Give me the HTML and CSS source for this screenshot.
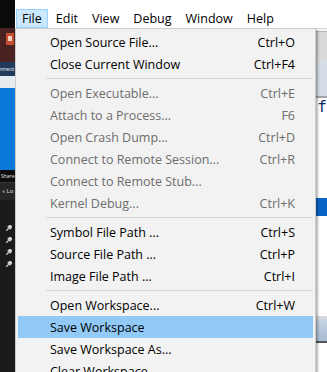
FILE: index.html
```html
<!DOCTYPE html>
<html>
<head>
<meta charset="utf-8">
<link rel="stylesheet" href="styles.css">
</head>
<body>
<div class="screen">
  <div class="side">
    <div class="s-black"></div>
    <div class="s-maroon">
      <svg class="ppt" width="8" height="12" viewBox="0 0 8 12"><rect x="0" y="0" width="8" height="12" fill="#c4502f"/><rect x="2" y="3" width="4" height="5" fill="#f0d0c0"/></svg>
    </div>
    <div class="s-navy">nnecti</div>
    <div class="s-light"></div>
    <div class="s-blue"></div>
    <div class="s-share">Share</div>
    <div class="s-lo">« Lo</div>
    <div class="s-dark">
      <svg class="pin" width="6" height="6" viewBox="0 0 6 6"><path d="M0 6L2.5 3.5M2 2L4 0L6 2L4 4Z" stroke="#cfcfcf" stroke-width="1.2" fill="#cfcfcf"/></svg>
      <svg class="pin" width="6" height="6" viewBox="0 0 6 6"><path d="M0 6L2.5 3.5M2 2L4 0L6 2L4 4Z" stroke="#cfcfcf" stroke-width="1.2" fill="#cfcfcf"/></svg>
      <svg class="pin" width="6" height="6" viewBox="0 0 6 6"><path d="M0 6L2.5 3.5M2 2L4 0L6 2L4 4Z" stroke="#cfcfcf" stroke-width="1.2" fill="#cfcfcf"/></svg>
      <svg class="pin" width="6" height="6" viewBox="0 0 6 6"><path d="M0 6L2.5 3.5M2 2L4 0L6 2L4 4Z" stroke="#cfcfcf" stroke-width="1.2" fill="#cfcfcf"/></svg>
    </div>
  </div>
  <div class="app">
    <div class="titlebar"></div>
    <nav class="menubar">
      <span class="mb-item active">File</span>
      <span class="mb-item">Edit</span>
      <span class="mb-item">View</span>
      <span class="mb-item">Debug</span>
      <span class="mb-item">Window</span>
      <span class="mb-item">Help</span>
    </nav>
    <div class="content">
      <div class="c-white1"></div>
      <div class="c-toolbar"></div>
      <div class="c-bluegray"></div>
      <div class="c-line"></div>
      <div class="c-text"><span>f</span></div>
      <div class="c-blue"></div>
      <div class="c-white2"></div>
      <div class="c-line2"></div>
      <div class="c-grad"></div>
      <div class="c-dline"></div>
      <div class="c-white3"></div>
    </div>
    <div class="dropdown">
      <div class="mi"><span>Open Source File...</span><span>Ctrl+O</span></div>
      <div class="mi"><span>Close Current Window</span><span>Ctrl+F4</span></div>
      <div class="sep"></div>
      <div class="mi dis"><span>Open Executable...</span><span>Ctrl+E</span></div>
      <div class="mi dis"><span>Attach to a Process...</span><span>F6</span></div>
      <div class="mi dis"><span>Open Crash Dump...</span><span>Ctrl+D</span></div>
      <div class="mi dis"><span>Connect to Remote Session...</span><span>Ctrl+R</span></div>
      <div class="mi dis"><span>Connect to Remote Stub...</span><span></span></div>
      <div class="mi dis"><span>Kernel Debug...</span><span>Ctrl+K</span></div>
      <div class="sep"></div>
      <div class="mi"><span>Symbol File Path ...</span><span>Ctrl+S</span></div>
      <div class="mi"><span>Source File Path ...</span><span>Ctrl+P</span></div>
      <div class="mi"><span>Image File Path ...</span><span>Ctrl+I</span></div>
      <div class="sep"></div>
      <div class="mi"><span>Open Workspace...</span><span>Ctrl+W</span></div>
      <div class="mi hl"><span>Save Workspace</span><span></span></div>
      <div class="mi"><span>Save Workspace As...</span><span></span></div>
      <div class="mi"><span>Clear Workspace</span><span></span></div>
    </div>
  </div>
</div>
</body>
</html>
```
FILE: styles.css
```css
html, body {
  margin: 0;
  padding: 0;
  width: 327px;
  height: 372px;
  overflow: hidden;
  background: #ffffff;
}
.screen {
  display: flex;
  width: 327px;
  height: 372px;
  font-family: "Open Sans", "Noto Sans", sans-serif;
  font-size: 12.5px;
}
.side {
  width: 15px;
  flex: none;
  display: flex;
  flex-direction: column;
  overflow: hidden;
  background: #1b1b1b;
}
.s-black { height: 28px; background: #0b0b0b; }
.s-maroon {
  height: 34px;
  background: #4a2222;
  display: flex;
  justify-content: flex-end;
  padding-top: 5px;
  box-sizing: border-box;
}
.ppt { margin-right: 1px; }
.s-navy {
  height: 14px;
  background: #203a5c;
  color: #ffffff;
  font-size: 5px;
  line-height: 14px;
  white-space: nowrap;
  overflow: hidden;
}
.s-light { height: 12px; background: #e6ebf0; }
.s-blue { height: 82px; background: #0a78d8; }
.s-share {
  height: 12px;
  background: #0d0d0d;
  color: #e8e8e8;
  font-size: 5px;
  line-height: 12px;
  padding-left: 1px;
  white-space: nowrap;
  border-bottom: 1px solid #3a3a3a;
}
.s-lo {
  height: 17px;
  background: #262626;
  color: #e0e0e0;
  font-size: 6px;
  line-height: 17px;
  padding-left: 2px;
  white-space: nowrap;
}
.s-dark {
  flex: 1;
  background: #1b1b1b;
  display: flex;
  flex-direction: column;
  align-items: flex-end;
  padding: 25px 3px 0 0;
  gap: 6px;
}
.pin { display: block; }

.app {
  flex: 1;
  position: relative;
  display: flex;
  flex-direction: column;
  background: #ffffff;
}
.titlebar { height: 9px; background: #ffffff; }
.menubar {
  height: 19px;
  display: flex;
  align-items: stretch;
  padding-left: 1px;
  color: #000000;
}
.mb-item {
  padding: 0 5px;
  border: 1px solid transparent;
  margin-right: 2px;
  line-height: 17px;
}
.mb-item.active {
  background: #cce8ff;
  border-color: #99d1ff;
}
.content {
  flex: 1;
  display: flex;
  flex-direction: column;
}
.c-white1 { height: 2px; background: #f4f4f4; border-top: 1px solid #d6d6d6; }
.c-toolbar { height: 29px; background: #dadada; border-top: 1px solid #b8b8b8; }
.c-bluegray { height: 35px; background: #d6dde7; }
.c-line { height: 2px; background: #a4a4a4; }
.c-text {
  height: 100px;
  background: #ffffff;
  display: flex;
  justify-content: flex-end;
  font-family: "DejaVu Sans Mono", monospace;
  font-size: 16px;
  line-height: 18px;
  color: #0a2a6a;
}
.c-blue { height: 18px; background: #0a64c8; }
.c-white2 { height: 100px; background: #ffffff; }
.c-line2 { height: 3px; background: #d9d9d9; }
.c-grad { height: 22px; background: linear-gradient(#c9d5e3, #a8bbd2); }
.c-dline { height: 2px; background: #555555; }
.c-white3 { flex: 1; background: #ffffff; }

.dropdown {
  position: absolute;
  top: 28px;
  left: 0;
  width: 301px;
  box-sizing: border-box;
  border: 1px solid #cccccc;
  background: #f2f2f2;
  padding: 2px;
  box-shadow: 2px 2px 2px rgba(0, 0, 0, 0.3);
  color: #000000;
}
.mi {
  height: 22px;
  display: flex;
  align-items: center;
  justify-content: space-between;
  padding: 0 18px 0 32px;
  white-space: nowrap;
}
.mi.dis { color: #6d6d6d; }
.mi.hl { background: #91c9f7; }
.sep {
  height: 1px;
  margin: 3px 0 3px 28px;
  background: #d7d7d7;
}
```
